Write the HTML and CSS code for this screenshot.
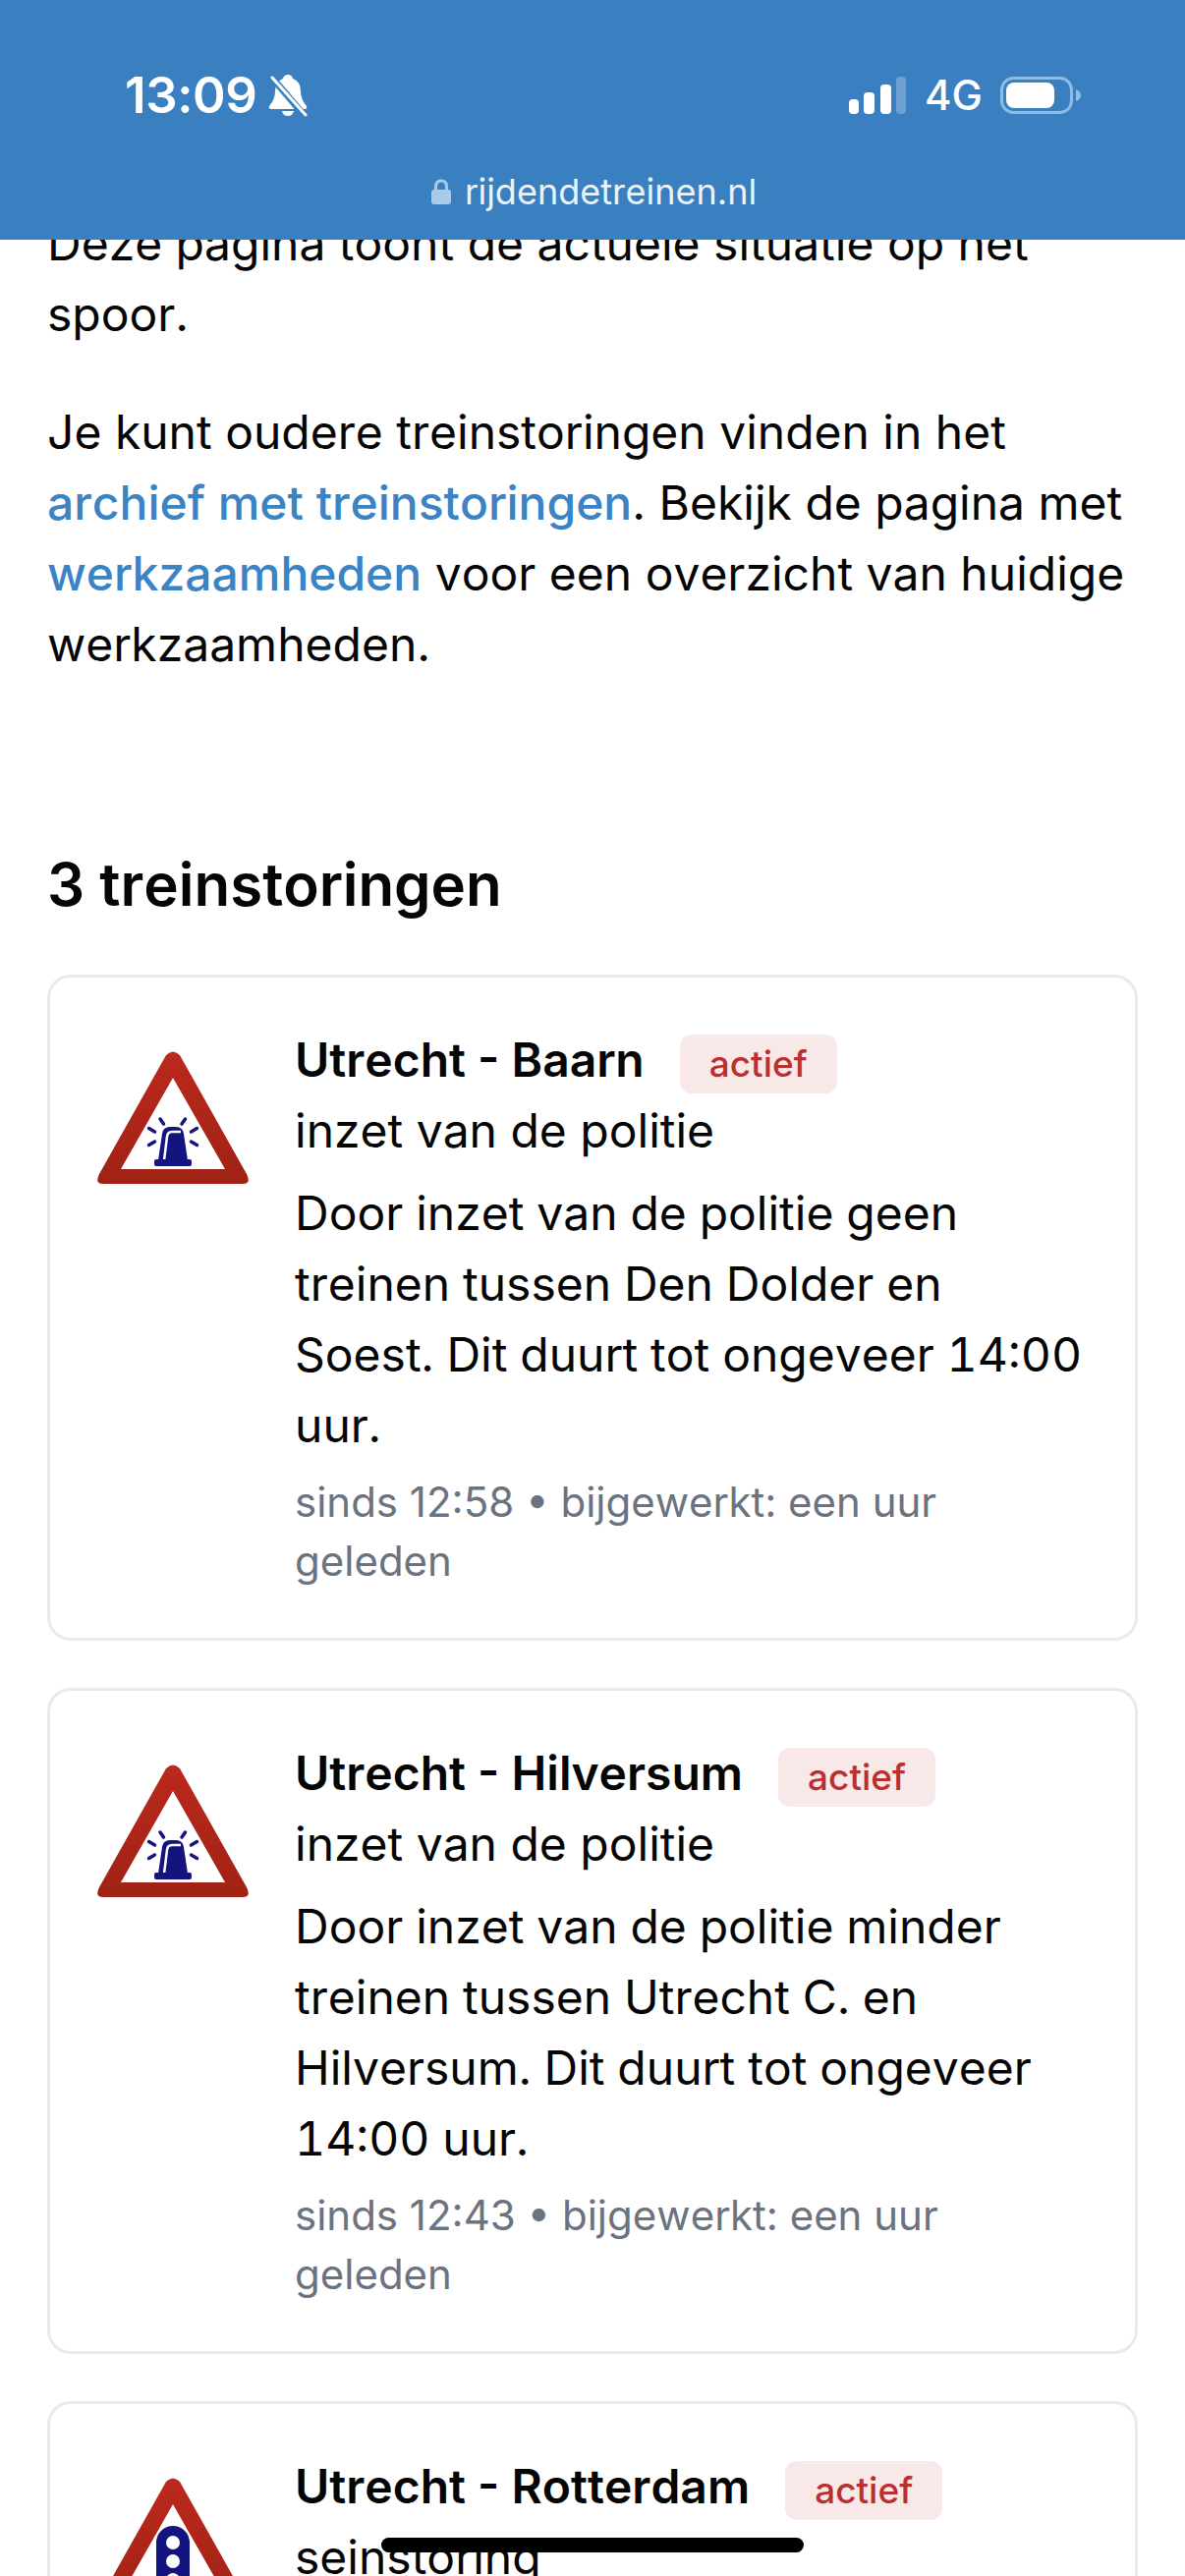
FILE: index.html
```html
<!DOCTYPE html>
<html lang="nl">

    <head>
        <title>Actuele treinstoringen</title>
        <meta charset="UTF-8">
        <meta name="viewport" content="width=device-width, initial-scale=1.0">
        <link rel="stylesheet" href="styles.css">
    </head>

    <body>
        <svg class="defs" width="0" height="0">
            <symbol id="triangle" viewBox="0 0 160 160">
                <defs>
                    <linearGradient id="redFade" x1="0" y1="0" x2="0" y2="1">
                        <stop offset="0" stop-color="#bb291d"/>
                        <stop offset="1" stop-color="#a02214"/>
                    </linearGradient>
                </defs>
                <path fill-rule="evenodd" fill="url(#redFade)" d="M73 14 Q80 7 87 14 L155 135 Q160 145 151 145 L9 145 Q0 145 5 135 Z M80 37 L27 130 L133 130 Z"/>
            </symbol>
        </svg>

        <!-- Phone status bar + address bar -->
        <header class="phoneBar">
            <div class="statusRow">
                <div class="statusLeft">
                    <span class="clock">13:09</span>
                    <svg class="bell" viewBox="0 0 40 44">
                        <path fill="#fff" d="M20 1 Q24 1 25 5 Q33 8 33 18 Q33 26 39 33 Q40 36 37 36 L3 36 Q0 36 1 33 Q7 26 7 18 Q7 8 15 5 Q16 1 20 1 Z M14 38 H26 Q25 43 20 43 Q15 43 14 38 Z"/>
                        <path stroke="#3a80c1" stroke-width="7" d="M3 3 L38 44"/>
                        <path stroke="#fff" stroke-width="3" stroke-linecap="round" d="M4 4 L38 42"/>
                    </svg>
                </div>
                <div class="statusRight">
                    <svg class="signal" viewBox="0 0 58 38">
                        <rect x="0" y="23" width="10" height="15" rx="4" fill="#fff"/>
                        <rect x="15" y="16" width="11" height="22" rx="4" fill="#fff"/>
                        <rect x="32" y="8" width="11" height="30" rx="4" fill="#fff"/>
                        <rect x="48" y="0" width="10" height="38" rx="4" fill="#fff" fill-opacity="0.25"/>
                    </svg>
                    <span class="network">4G</span>
                    <svg class="battery" viewBox="0 0 82 38">
                        <rect x="1.5" y="1.5" width="71" height="35" rx="12" fill="none" stroke="#8fbce3" stroke-width="3"/>
                        <rect x="6" y="6" width="49" height="26" rx="8" fill="#fff"/>
                        <path d="M77 13 Q82 15 82 19 Q82 23 77 25 Z" fill="#8fbce3"/>
                    </svg>
                </div>
            </div>
            <div class="urlRow">
                <svg class="lock" viewBox="0 0 20 26">
                    <path fill="none" stroke="#a9cbe9" stroke-width="3" d="M4.5 12 V8 Q4.5 2 10 2 Q15.5 2 15.5 8 V12"/>
                    <rect y="11" width="20" height="15" rx="3" fill="#a9cbe9"/>
                </svg>
                <span>rijdendetreinen.nl</span>
            </div>
        </header>

        <main class="content">
            <p class="intro">Deze pagina toont de actuele situatie op het spoor.</p>
            <p class="intro">Je kunt oudere treinstoringen vinden in het <a href="#">archief met treinstoringen</a>. Bekijk de pagina met <a href="#">werkzaamheden</a> voor een overzicht van huidige werkzaamheden.</p>

            <h2 class="sectionTitle">3 treinstoringen</h2>

            <article class="card">
                <svg class="sign" viewBox="0 0 160 160">
                    <use href="#triangle"/>
                    <path class="beaconRays" d="M67 79 L70.5 84 M92.5 79 L89 84 M55.5 88.5 L61.5 92 M104.5 88.5 L98.500 92 M55.5 105.500 L61.5 102 M104.5 105.500 L98.500 102"/>
                    <path class="beaconBody" d="M65 121 L69 94 Q70 87 77 87 H83 Q90 87 91 94 L95 121 Z"/>
                    <path class="beaconShine" d="M71 121 L74 97 Q74.500 92 79 92 H88"/>
                    <rect class="beaconBody" x="61" y="120" width="38" height="7" rx="2"/>
                </svg>
                <div class="cardBody">
                    <div class="cardHead">
                        <h3 class="route">Utrecht - Baarn</h3>
                        <span class="badge">actief</span>
                    </div>
                    <p class="cause">inzet van de politie</p>
                    <p class="message">Door inzet van de politie geen treinen tussen Den Dolder en Soest. Dit duurt tot ongeveer 14:00 uur.</p>
                    <p class="meta">sinds 12:58 • bijgewerkt: een uur geleden</p>
                </div>
            </article>

            <article class="card">
                <svg class="sign" viewBox="0 0 160 160">
                    <use href="#triangle"/>
                    <path class="beaconRays" d="M67 79 L70.5 84 M92.5 79 L89 84 M55.5 88.5 L61.5 92 M104.5 88.5 L98.500 92 M55.5 105.500 L61.5 102 M104.5 105.500 L98.500 102"/>
                    <path class="beaconBody" d="M65 121 L69 94 Q70 87 77 87 H83 Q90 87 91 94 L95 121 Z"/>
                    <path class="beaconShine" d="M71 121 L74 97 Q74.500 92 79 92 H88"/>
                    <rect class="beaconBody" x="61" y="120" width="38" height="7" rx="2"/>
                </svg>
                <div class="cardBody">
                    <div class="cardHead">
                        <h3 class="route">Utrecht - Hilversum</h3>
                        <span class="badge">actief</span>
                    </div>
                    <p class="cause">inzet van de politie</p>
                    <p class="message">Door inzet van de politie minder treinen tussen Utrecht C. en Hilversum. Dit duurt tot ongeveer 14:00 uur.</p>
                    <p class="meta">sinds 12:43 • bijgewerkt: een uur geleden</p>
                </div>
            </article>

            <article class="card">
                <svg class="sign" viewBox="0 0 160 160">
                    <use href="#triangle"/>
                    <rect class="beaconBody" x="63" y="59" width="34" height="72" rx="17"/>
                    <circle class="signalDot" cx="80" cy="76" r="7"/>
                    <circle class="signalDot" cx="80" cy="95" r="7"/>
                    <circle class="signalDot" cx="80" cy="114" r="7"/>
                </svg>
                <div class="cardBody">
                    <div class="cardHead">
                        <h3 class="route">Utrecht - Rotterdam</h3>
                        <span class="badge">actief</span>
                    </div>
                    <p class="cause">seinstoring</p>
                </div>
            </article>
        </main>

        <div class="homeBar"></div>
    </body>

</html>
```

FILE: styles.css
```css
* {
    margin: 0;
    padding: 0;
    box-sizing: border-box;
}

html,
body {
    height: 2622px;
    overflow: hidden;
    background: #fff;
}

body {
    position: relative;
    font-family: Inter, "Noto Sans", sans-serif;
    font-size: 48px;
    line-height: 72px;
    color: #050505;
    font-kerning: none;
}

.defs {
    position: absolute;
}

/* phone chrome */
.phoneBar {
    position: absolute;
    z-index: 2;
    top: 0;
    left: 0;
    width: 100%;
    height: 244px;
    padding-top: 70px;
    background: #3a80c1;
    color: #fff;
}

.statusRow {
    display: flex;
    justify-content: space-between;
    align-items: center;
    height: 54px;
    padding: 0 106px 0 127px;
}

.statusLeft,
.statusRight {
    display: flex;
    align-items: center;
}

.clock {
    font-size: 51px;
    line-height: 54px;
    font-weight: 600;
    letter-spacing: -0.4px;
}

.bell {
    width: 40px;
    height: 44px;
    margin-left: 11px;
}

.signal {
    width: 58px;
    height: 38px;
}

.network {
    margin-left: 19px;
    font-size: 42px;
    line-height: 54px;
    font-weight: 500;
}

.battery {
    width: 82px;
    height: 38px;
    margin-left: 18px;
}

.urlRow {
    display: flex;
    justify-content: center;
    align-items: center;
    gap: 14px;
    margin-top: 44px;
    padding-left: 3px;
    font-size: 36px;
    line-height: 54px;
    color: #eaf3fb;
}

.lock {
    width: 20px;
    height: 26px;
}

/* page */
.content {
    padding: 212px 48px 0;
}

.intro + .intro {
    margin-top: 48px;
}

.intro a {
    color: #3a83c4;
    font-weight: 500;
    text-decoration: none;
}

.sectionTitle {
    margin-top: 166px;
    font-size: 60px;
    line-height: 84px;
    font-weight: 600;
}

.card {
    display: flex;
    gap: 44px;
    margin-top: 48px;
    padding: 48px 48px 48px 45px;
    border: 3px solid #e9eaec;
    border-radius: 24px;
    background: #fff;
}

.sectionTitle + .card {
    margin-top: 50px;
}

.sign {
    flex: none;
    width: 160px;
    height: 160px;
    margin-top: 17px;
}

.beaconRays {
    fill: none;
    stroke: #14147f;
    stroke-width: 3.5;
    stroke-linecap: round;
}

.beaconBody {
    fill: #14147f;
}

.beaconShine {
    fill: none;
    stroke: #fff;
    stroke-width: 2.5;
}

.signalDot {
    fill: #fff;
}

.cardBody {
    flex: 1;
    min-width: 0;
}

.cardHead {
    display: flex;
    align-items: center;
    gap: 36px;
}

.route {
    font-size: 48px;
    line-height: 72px;
    font-weight: 600;
}

.badge {
    padding: 0 30px;
    margin-top: 8px;
    border-radius: 12px;
    background: #f8e8e8;
    color: #b83030;
    font-size: 37px;
    line-height: 60px;
    font-weight: 500;
}

.message {
    margin-top: 12px;
    font-variant-numeric: tabular-nums;
}

.meta {
    margin-top: 12px;
    font-size: 42px;
    line-height: 60px;
    color: #6b7280;
}

.homeBar {
    position: absolute;
    z-index: 3;
    left: 388px;
    top: 2583px;
    width: 430px;
    height: 15px;
    border-radius: 8px;
    background: #000;
}
```
